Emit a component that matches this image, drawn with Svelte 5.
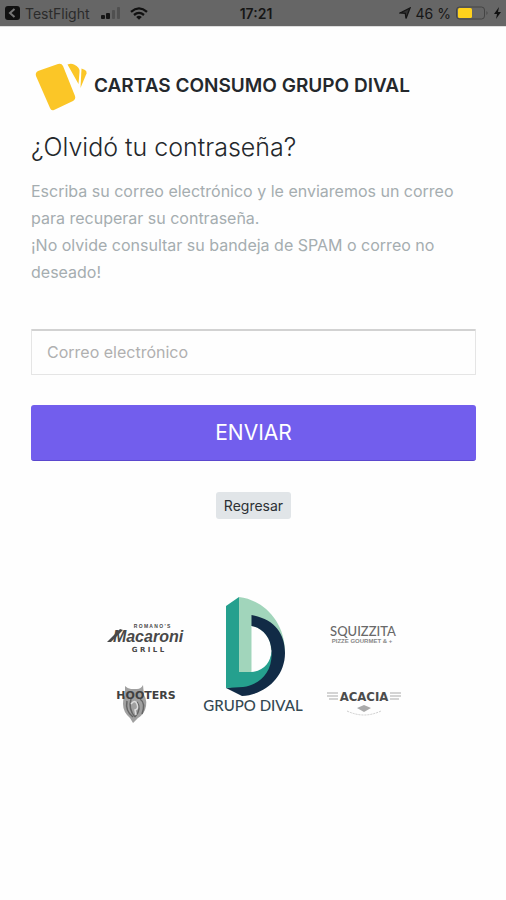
<script>
  let email = $state('');
</script>

<div class="screen">
  <div class="status">
    <div class="side">
      <svg width="15" height="14" viewBox="0 0 15 14" aria-hidden="true">
        <rect width="15" height="14" rx="3" fill="#111" />
        <path d="M9.500 3 5 7l4.500 4" fill="none" stroke="#777" stroke-width="2" />
      </svg>
      <span class="app">TestFlight</span>
      <svg class="signal" width="20" height="12" viewBox="0 0 20 12" aria-hidden="true">
        <rect x="0" y="8" width="4" height="4" rx="1" fill="#151515" />
        <rect x="5" y="6" width="4" height="6" rx="1" fill="#151515" />
        <rect x="11" y="3" width="3" height="9" rx="1" fill="#505050" />
        <rect x="16" y="0" width="3" height="12" rx="1" fill="#505050" />
      </svg>
      <svg width="18" height="13" viewBox="0 0 18 13" aria-hidden="true">
        <path d="M1 4.800Q9-2 17 4.800M4 8Q9 3.800 14 8" fill="none" stroke="#111" stroke-width="2.300" />
        <path d="M6.200 9.900Q9 7.700 11.800 9.900L9 12.800Z" fill="#111" />
      </svg>
    </div>
    <strong>17:21</strong>
    <div class="side right">
      <svg width="12" height="12" viewBox="0 0 12 12" aria-hidden="true">
        <path d="M1 6 11 1 7 11.500 6.300 6.300Z" fill="#333" stroke="#151515" stroke-width="1.300" />
      </svg>
      <span>46 %</span>
      <svg width="33" height="14" viewBox="0 0 33 14" aria-hidden="true">
        <rect x=".5" y="1" width="28" height="12" rx="3" fill="none" stroke="#444" />
        <rect x="2" y="2" width="14" height="10" rx="1.500" fill="#ffd21c" />
        <path d="M30.500 5q2 2 0 4Z" fill="#444" />
      </svg>
      <svg width="7" height="12" viewBox="0 0 7 12" aria-hidden="true">
        <path d="M5 0 0 7h3L2 12 7 5H4Z" fill="#111" />
      </svg>
    </div>
  </div>

  <main>
    <header>
      <svg width="56" height="54" viewBox="0 0 56 54" aria-hidden="true">
        <path d="M7 12 27 5Q30.500 4 32 7L44 37Q45 40 42 42L23 51Q20 52 19 49L5 17Q4 13.500 7 12Z" fill="#fbc627" />
        <path d="M36.500 5.500Q40 4 43 5.500Q49 8 48.500 13L47.500 25Z" fill="#fbc627" />
        <path d="M50.500 9.500l3.500 1.500q2 1 1.500 3.500L49.500 29Z" fill="#fbc627" />
      </svg>
      <span class="brand">CARTAS CONSUMO GRUPO DIVAL</span>
    </header>

    <h1>¿Olvidó tu contraseña?</h1>
    <p>
      Escriba su correo electrónico y le enviaremos un correo para recuperar su contraseña.<br />
      ¡No olvide consultar su bandeja de SPAM o correo no deseado!
    </p>

    <form onsubmit={(e) => e.preventDefault()}>
      <input type="email" aria-label="Correo electrónico" placeholder="Correo electrónico" bind:value={email} />
      <button class="send" type="submit">ENVIAR</button>
      <button class="back" type="button">Regresar</button>
    </form>

    <svg class="logos" width="300" height="132" viewBox="0 0 300 132" role="img" aria-label="Grupo Dival y sus restaurantes">
      <!-- Macaroni Grill -->
      <g fill="#484848" text-anchor="middle">
        <text x="48" y="33" font-family="Liberation Sans" font-size="5" font-weight="700">R O M A N O ' S</text>
        <text x="44" y="47" font-family="Liberation Sans" font-size="16" font-weight="700" font-style="italic">Macaroni</text>
        <path d="M3 47 16 34l3 1-3 3-9 9Z" />
        <text x="44" y="57" font-family="DejaVu Sans" font-size="7" font-weight="700">G R I L L</text>
      </g>

      <!-- Hooters -->
      <g>
        <path d="M21 91q3 3 6 3h6q4 0 6-4l1 10q4 6 1 15-3 6-7 8l-5 5-3-5q-7-6-7-14 0-6 2-9Z" fill="#a0a0a0" />
        <path d="M23 106q-2 10 6 16M27 104q-3 10 4 18M36 104q6 4 2 15M33 107q5 7-2 15" fill="none" stroke="#666" stroke-width="1.500" />
        <path d="M27 109q4-5 6 0 2 5-2 6l1 5" fill="none" stroke="#ddd" stroke-width="1.500" />
        <text x="42" y="104" text-anchor="middle" font-family="DejaVu Sans" font-size="11" font-weight="700" fill="#404040">HOOTERS</text>
      </g>

      <!-- Grupo Dival -->
      <g>
        <path d="M135 2C160 5 181 27 181 57L167 55C167 42 158 33 147.500 31V78H135Z" fill="#a1d5bb" />
        <path d="M147.500 20C170 24 181 38 181 58C181 83 160 100 138 101L122 93 139 90C158 88 167 72 167.500 56C167 42 158 33 147.500 31Z" fill="#112b46" />
        <path d="M122 11 135 2V77H147.500C160 76 167 67 167.500 56C169 78 155 90 139 92L122 93Z" fill="#25a08e" />
        <text x="149" y="116" text-anchor="middle" font-family="Lato" font-size="15" font-weight="500" fill="#344953">GRUPO DIVAL</text>
      </g>

      <!-- Squizzita -->
      <g fill="#696969" text-anchor="middle">
        <text x="259" y="41" font-family="Lato" font-size="13" font-weight="500">SQUIZZITA</text>
        <text x="258" y="48" font-family="Liberation Sans" font-size="6" font-weight="700" fill="#888">PIZZE GOURMET &amp; +</text>
      </g>

      <!-- Acacia -->
      <g>
        <text x="260" y="106" text-anchor="middle" font-family="DejaVu Sans Condensed, Roboto" font-size="13" font-weight="700" fill="#4c4c4c">ACACIA</text>
        <path d="M223 98h11M223 101h11M225 104h9M286 98h11M286 101h11M286 104h9" stroke="#aaa" />
        <path d="m253 113 7-3 7 3-7 4Z" fill="#aaa" />
        <path d="M243 116q17 8 34 0" fill="none" stroke="#ccc" stroke-dasharray="2 1" />
      </g>
    </svg>
  </main>
</div>

<style>
  :global(body) {
    margin: 0;
    background: #fefefe;
  }

  .screen {
    min-height: 100vh;
    background: #fefefe;
    color: #24282c;
    font-family: Inter, Roboto, sans-serif;
  }

  .status {
    display: flex;
    align-items: center;
    height: 27px;
    padding: 0 5px;
    background: #666;
    border-bottom: 1px solid #ddd;
    box-sizing: border-box;
    color: #161616;
    font-size: 14px;
  }

  .status strong {
    padding-left: 6px;
    font-weight: 600;
  }

  .side {
    display: flex;
    flex: 1;
    align-items: center;
    gap: 5px;
  }

  .right {
    justify-content: flex-end;
  }

  .app {
    color: #2b2b2b;
  }

  .signal {
    margin: 0 4px 0 6px;
  }

  main {
    display: flex;
    flex-direction: column;
    padding: 32px 30px 40px 31px;
  }

  header {
    display: flex;
    align-items: center;
    gap: 7px;
  }

  .brand {
    font-size: 19px;
    font-weight: 600;
    line-height: 24px;
    white-space: nowrap;
  }

  h1 {
    margin: 18px 0 0;
    font-size: 25px;
    font-weight: 300;
    line-height: 32px;
  }

  p {
    margin: 15px 0 0;
    color: #a5adb0;
    font-size: 16px;
    font-weight: 400;
    line-height: 27px;
  }

  form {
    display: flex;
    flex-direction: column;
    align-items: center;
    margin-top: 43px;
  }

  input {
    width: 100%;
    height: 46px;
    padding: 0 15px 2px;
    border: 1px solid #e5e5e5;
    border-top: 2px solid #d2d2d2;
    border-radius: 1px;
    box-sizing: border-box;
    background: #fefefe;
    color: #333;
    font: 400 16px Inter, Roboto, sans-serif;
  }

  input::placeholder {
    color: #b0b0b0;
  }

  .send {
    width: 100%;
    height: 56px;
    margin-top: 30px;
    border: 0;
    border-bottom: 1px solid #5b48ce;
    border-radius: 3px;
    background: #725eed;
    color: #fff;
    font: 400 21px Inter, Roboto, sans-serif;
  }

  .back {
    height: 27px;
    margin-top: 31px;
    padding: 0 8px;
    border: 0;
    border-radius: 3px;
    background: #e1e5e8;
    color: #2c3034;
    font: 400 14px Inter, Roboto, sans-serif;
  }

  .logos {
    align-self: center;
    margin-top: 76px;
  }
</style>
